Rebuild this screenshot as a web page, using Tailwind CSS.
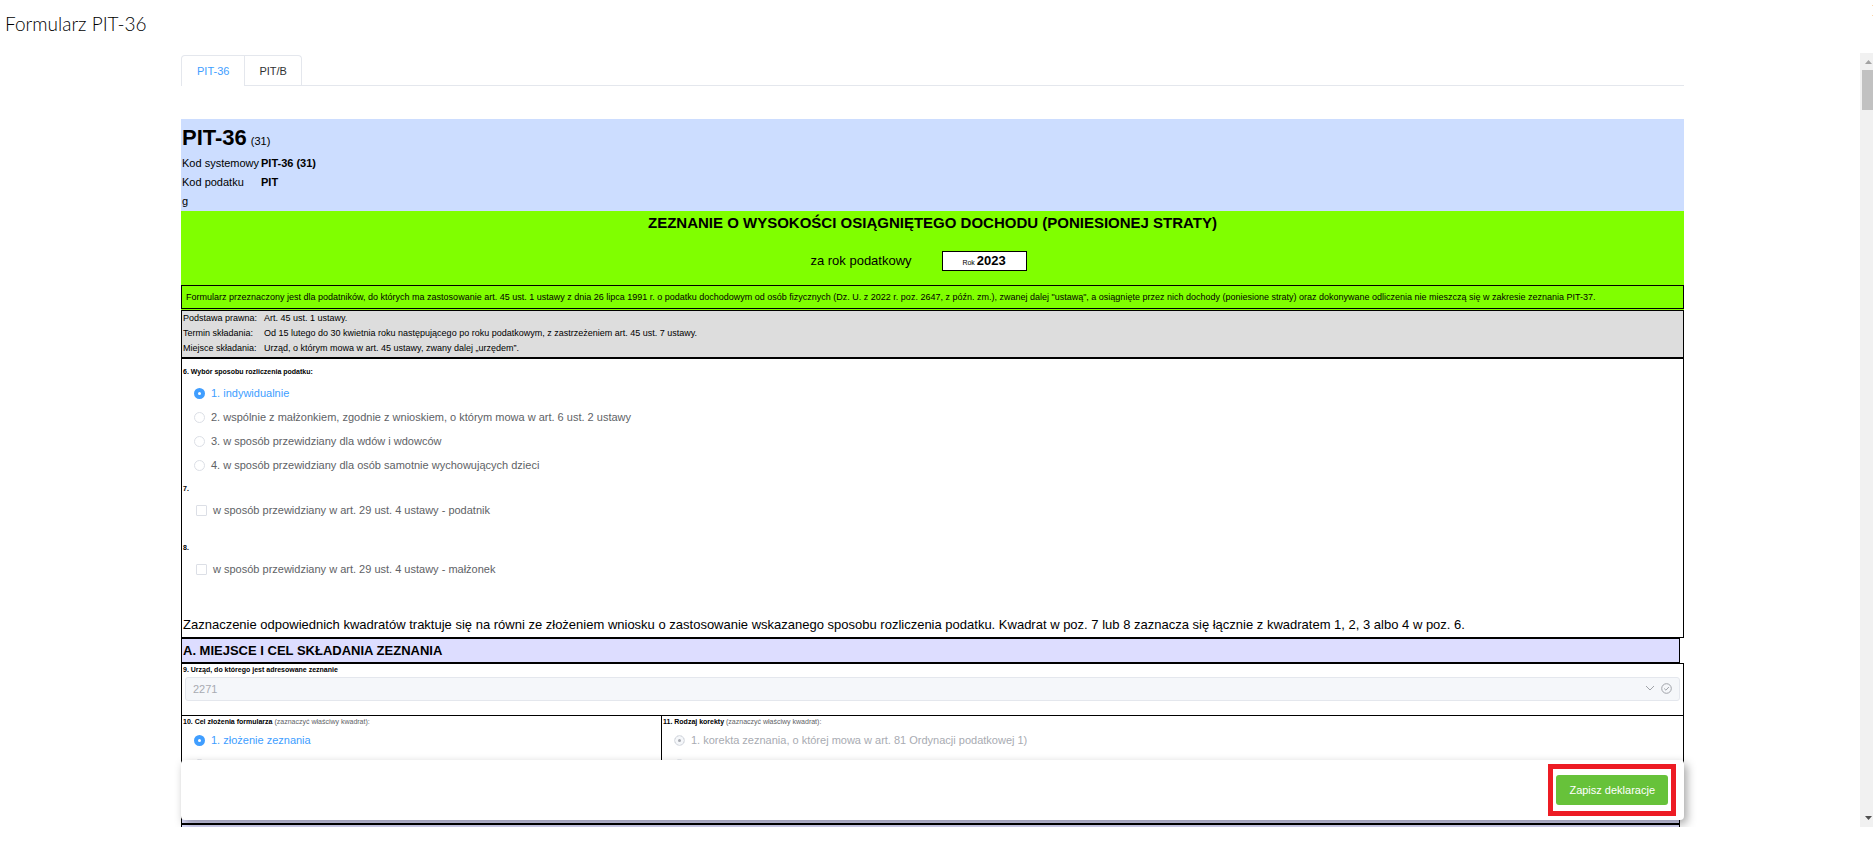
<!DOCTYPE html>
<html lang="pl">
<head>
  <meta charset="UTF-8" />
  <meta name="viewport" content="width=device-width, initial-scale=1.0"/>
  <title>Formularz PIT-36</title>
  <script src="https://cdn.jsdelivr.net/npm/@tailwindcss/browser@4"></script>
</head>
<body class="relative flex h-screen flex-col overflow-hidden bg-white font-['Liberation_Sans',Arial,sans-serif] text-[11px] text-black">
  <!-- Title bar -->
  <header class="flex h-[53px] shrink-0 items-center px-[5px] pb-1">
    <h1 class="font-[Lato,sans-serif] text-[19px] font-light text-black">Formularz PIT-36</h1>
  </header>
  <span class="absolute top-[5px] right-0 h-[11px] w-px border-t border-b border-orange-200"></span>

  <!-- Scrolled area -->
  <main class="mb-[19px] flex min-h-0 flex-1 overflow-hidden">
    <div class="relative min-w-0 flex-1 pt-0.5 pr-44 pl-[181px]">
      <!-- Tabs -->
      <nav class="flex h-[31px] border-b border-[#e4e7ed]">
        <div class="-mb-px flex rounded-t border border-b-0 border-[#e4e7ed]">
          <a href="#pit36" class="flex items-center border-b border-white px-[15px] pt-0.5 text-[#409eff]">PIT-36</a>
          <a href="#pitb" class="flex items-center border-b border-l border-[#e4e7ed] px-3.5 pt-0.5 text-[#303133]">PIT/B</a>
        </div>
      </nav>

      <form id="pit36" class="mt-[33px]">
        <!-- Form code -->
        <div class="bg-[#ccddff] pl-px leading-[19px]">
          <h2 class="flex h-[35px] items-baseline gap-1"><b class="text-[22px] leading-[37px]">PIT-36</b> (31)</h2>
          <dl class="grid grid-cols-[79px_1fr]">
            <dt>Kod systemowy</dt>
            <dd class="font-bold">PIT-36 (31)</dd>
            <dt>Kod podatku</dt>
            <dd class="font-bold">PIT</dd>
          </dl>
          <p>g</p>
        </div>

        <!-- Heading -->
        <div class="bg-[#80ff00] pb-px text-center">
          <h2 class="text-[15px] leading-6 font-bold">ZEZNANIE O WYSOKOŚCI OSIĄGNIĘTEGO DOCHODU (PONIESIONEJ STRATY)</h2>
          <div class="mt-4 mb-3.5 flex h-5 items-center justify-center pr-7 text-[13px] leading-[18px]">
            <span class="mr-[30px]">za rok podatkowy</span>
            <span class="flex h-5 w-[85px] items-baseline justify-center gap-0.5 border border-black bg-white"><span class="text-[7px]">Rok</span><b>2023</b></span>
          </div>
          <p class="border border-black px-1 text-left text-[9px] leading-[22px]">Formularz przeznaczony jest dla podatników, do których ma zastosowanie art. 45 ust. 1 ustawy z dnia 26 lipca 1991 r. o podatku dochodowym od osób fizycznych (Dz. U. z 2022 r. poz. 2647, z późn. zm.), zwanej dalej "ustawą", a osiągnięte przez nich dochody (poniesione straty) oraz dokonywane odliczenia nie mieszczą się w zakresie zeznania PIT-37.</p>
        </div>
        <dl class="grid grid-cols-[81px_1fr] border border-black bg-[#dddddd] px-px pb-px text-[9px] leading-[15px]">
          <dt>Podstawa prawna:</dt>
          <dd>Art. 45 ust. 1 ustawy.</dd>
          <dt>Termin składania:</dt>
          <dd>Od 15 lutego do 30 kwietnia roku następującego po roku podatkowym, z zastrzeżeniem art. 45 ust. 7 ustawy.</dd>
          <dt>Miejsce składania:</dt>
          <dd>Urząd, o którym mowa w art. 45 ustawy, zwany dalej „urzędem”.</dd>
        </dl>

        <!-- Settlement method -->
        <div class="border border-black px-px pt-2 pb-0.5 text-[#606266]">
          <fieldset>
            <legend class="mb-1 text-[7px] leading-[10px] font-bold text-black">6. Wybór sposobu rozliczenia podatku:</legend>
            <label class="flex h-6 items-center gap-1.5 pl-[11px] text-[#409eff]">
              <input type="radio" name="poz6" checked class="size-[11px] appearance-none rounded-full border-4 border-[#409eff] bg-white" />
              1. indywidualnie
            </label>
            <label class="flex h-6 items-center gap-1.5 pl-[11px]">
              <input type="radio" name="poz6" class="size-[11px] appearance-none rounded-full border border-[#dcdfe6] bg-white" />
              2. wspólnie z małżonkiem, zgodnie z wnioskiem, o którym mowa w art. 6 ust. 2 ustawy
            </label>
            <label class="flex h-6 items-center gap-1.5 pl-[11px]">
              <input type="radio" name="poz6" class="size-[11px] appearance-none rounded-full border border-[#dcdfe6] bg-white" />
              3. w sposób przewidziany dla wdów i wdowców
            </label>
            <label class="flex h-6 items-center gap-1.5 pl-[11px]">
              <input type="radio" name="poz6" class="size-[11px] appearance-none rounded-full border border-[#dcdfe6] bg-white" />
              4. w sposób przewidziany dla osób samotnie wychowujących dzieci
            </label>
          </fieldset>
          <fieldset class="mt-[7px]">
            <legend class="mb-1 text-[7px] leading-[10px] font-bold text-black">7.</legend>
            <label class="flex h-6 items-center gap-1.5 pl-[13px]">
              <input type="checkbox" name="poz7" class="size-[11px] appearance-none rounded-[1px] border border-[#dcdfe6] bg-white" />
              w sposób przewidziany w art. 29 ust. 4 ustawy - podatnik
            </label>
          </fieldset>
          <fieldset class="mt-[21px]">
            <legend class="mb-1 text-[7px] leading-[10px] font-bold text-black">8.</legend>
            <label class="flex h-6 items-center gap-1.5 pl-[13px]">
              <input type="checkbox" name="poz8" class="size-[11px] appearance-none rounded-[1px] border border-[#dcdfe6] bg-white" />
              w sposób przewidziany w art. 29 ust. 4 ustawy - małżonek
            </label>
          </fieldset>
          <p class="mt-[34px] text-[13px] leading-5 text-black">Zaznaczenie odpowiednich kwadratów traktuje się na równi ze złożeniem wniosku o zastosowanie wskazanego sposobu rozliczenia podatku. Kwadrat w poz. 7 lub 8 zaznacza się łącznie z kwadratem 1, 2, 3 albo 4 w poz. 6.</p>
        </div>

        <!-- Section A -->
        <h2 class="mr-1 border border-black bg-[#ddddff] px-px text-[13px] leading-[23px] font-bold">A. MIEJSCE I CEL SKŁADANIA ZEZNANIA</h2>
        <div class="border border-b-0 border-black px-px pt-px pb-3.5">
          <label for="urzad" class="mb-0.5 block text-[7px] leading-[10px] font-bold">9. Urząd, do którego jest adresowane zeznanie</label>
          <div class="relative mr-0.5 ml-0.5">
            <select id="urzad" disabled class="block h-6 w-full appearance-none rounded-[3px] border border-[#e4e7ed] bg-[#f5f7fa] px-[7px] text-[11px] text-[#a8abb2] opacity-100">
              <option>2271</option>
            </select>
            <div class="absolute inset-y-0 right-2 flex items-center gap-1.5 pb-0.5 text-[#a0a3a9]">
              <svg class="size-[10px]" viewBox="0 0 10 10" fill="none" stroke="currentColor"><path d="M1 3l4 4 4-4"/></svg>
              <svg class="size-[11px]" viewBox="0 0 11 11" fill="none" stroke="currentColor"><circle cx="5.500" cy="5.500" r="4.800"/><path d="M3.200 5.500l1.700 1.700 3-3.200"/></svg>
            </div>
          </div>
        </div>

        <div class="grid grid-cols-[479px_1fr] border border-b-0 border-black text-[#606266]">
          <fieldset class="h-[82px] min-w-0 px-px pt-px">
            <legend class="float-left mb-px w-full text-[7px] leading-[10px]"><b class="text-black">10. Cel złożenia formularza</b> (zaznaczyć właściwy kwadrat):</legend>
            <label class="clear-both flex h-6 items-center gap-1.5 pl-[11px] text-[#409eff]">
              <input type="radio" name="poz10" checked class="size-[11px] appearance-none rounded-full border-4 border-[#409eff] bg-white" />
              1. złożenie zeznania
            </label>
            <label class="flex h-6 items-center gap-1.5 pl-[11px]">
              <input type="radio" name="poz10" class="size-[11px] appearance-none rounded-full border border-[#dcdfe6] bg-white" />
              2. korekta zeznania
            </label>
          </fieldset>
          <fieldset disabled class="min-w-0 border-l border-black px-px pt-px">
            <legend class="float-left mb-px w-full text-[7px] leading-[10px] text-[#606266]"><b class="text-black">11. Rodzaj korekty</b> (zaznaczyć właściwy kwadrat):</legend>
            <label class="clear-both flex h-6 items-center gap-1.5 pl-[11px] text-[#a8abb2]">
              <input type="radio" name="poz11" checked class="size-[11px] appearance-none rounded-full border border-[#e4e7ed] bg-[#a8abb2] shadow-[inset_0_0_0_3px_#f5f7fa]" />
              1. korekta zeznania, o której mowa w art. 81 Ordynacji podatkowej 1)
            </label>
            <label class="flex h-6 items-center gap-1.5 pl-[11px] text-[#a8abb2]">
              <input type="radio" name="poz11" class="size-[11px] appearance-none rounded-full border border-[#e4e7ed] bg-[#f5f7fa]" />
              2. korekta zeznania, o której mowa w art. 81b § 1a Ordynacji podatkowej 2)
            </label>
          </fieldset>
        </div>
        <div class="mr-1 h-[26px] border border-black bg-[#ddddff]"></div>
        <div class="mr-1 h-6 border border-black bg-[#ddddff]"></div>
      </form>

      <!-- Save bar -->
      <div class="absolute right-44 bottom-[7px] left-[181px] flex h-[60px] items-center justify-end rounded bg-white pr-2 shadow-[3px_4px_10px_rgba(0,0,0,0.35)]">
        <div class="flex h-[52px] items-center border-[5px] border-[#ed1c24] px-[3px]">
          <button type="button" class="h-[30px] rounded-[3px] bg-[#67c23a] px-[13px] font-medium text-white">Zapisz deklaracje</button>
        </div>
      </div>
    </div>

    <!-- Scrollbar -->
    <div class="flex w-[13px] shrink-0 flex-col items-end bg-[#f1f1f1] pt-[7px] pb-[7px]">
      <svg class="mr-px h-1 w-[7px]" viewBox="0 0 7 4" fill="#a3a3a3"><path d="M0 4L3.500 0 7 4z"/></svg>
      <div class="mt-1.5 h-10 w-[11px] bg-[#c1c1c1]"></div>
      <svg class="mt-auto mr-px h-1 w-[7px]" viewBox="0 0 7 4" fill="#505050"><path d="M0 0h7L3.500 4z"/></svg>
    </div>
  </main>
</body>
</html>
